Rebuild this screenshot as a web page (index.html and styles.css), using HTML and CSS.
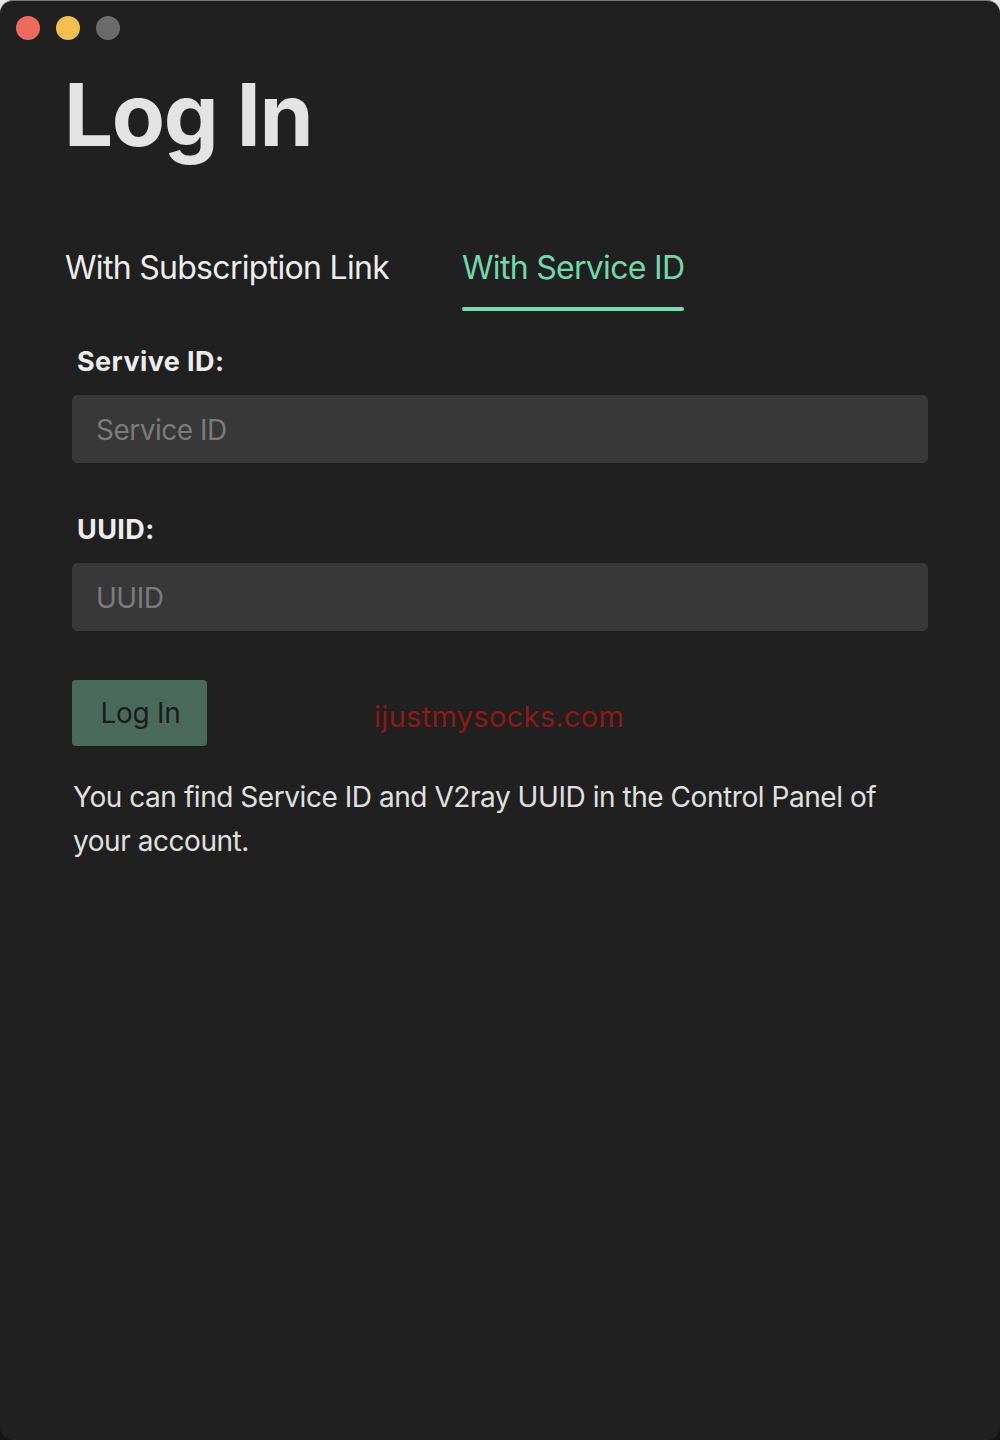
FILE: index.html
```html
<!DOCTYPE html>
<html lang="en">
<head>
<meta charset="utf-8">
<title>Log In</title>
<link rel="stylesheet" href="styles.css">
</head>
<body>
<div class="window">
  <div class="lights">
    <span class="light red"></span>
    <span class="light yellow"></span>
    <span class="light grey"></span>
  </div>
  <div class="content">
    <h1 class="title">Log In</h1>
    <div class="tabs">
      <div class="tab"><span class="tab-label">With Subscription Link</span></div>
      <div class="tab active"><span class="tab-label">With Service ID</span><span class="tab-bar"></span></div>
    </div>
    <div class="form">
      <label class="field-label label-first">Servive ID:</label>
      <div class="input"><span class="placeholder">Service ID</span></div>
      <label class="field-label label-next">UUID:</label>
      <div class="input"><span class="placeholder">UUID</span></div>
      <div class="actions">
        <button class="btn">Log In</button>
        <span class="watermark">ijustmysocks.com</span>
      </div>
      <p class="hint">You can find Service ID and V2ray UUID in the Control Panel of your account.</p>
    </div>
  </div>
</div>
</body>
</html>
```
FILE: styles.css
```css
html, body {
  margin: 0;
  padding: 0;
}
body {
  width: 1000px;
  height: 1440px;
  background: linear-gradient(#e6e6e6 0%, #e6e6e6 50%, #141414 50%, #141414 100%);
  font-family: Inter, "Noto Sans", sans-serif;
  overflow: hidden;
}
.window {
  box-sizing: border-box;
  width: 1000px;
  height: 1440px;
  background: #202020;
  border-radius: 13px;
  border-top: 1px solid #7a7a7a;
  padding: 15px 0 0 0;
}
.lights {
  display: flex;
  gap: 16px;
  padding-left: 16px;
}
.light {
  width: 24px;
  height: 24px;
  border-radius: 50%;
}
.red { background: #ee6a5e; }
.yellow { background: #f5bf4f; }
.grey { background: #6b6b6b; }

.content {
  padding-left: 66px;
  padding-right: 72px;
}
.title {
  margin: 31px 0 0 -2px;
  font-size: 87px;
  line-height: 88px;
  font-weight: 700;
  color: #e3e3e3;
  letter-spacing: -1.4px;
}
.tabs {
  display: flex;
  gap: 73px;
  margin-top: 89px;
  margin-left: -1px;
}
.tab {
  display: flex;
  flex-direction: column;
  gap: 19px;
}
.tab-label {
  font-size: 32px;
  line-height: 40px;
  color: #ededed;
  white-space: nowrap;
  letter-spacing: -0.7px;
}
.tab.active .tab-label {
  color: #74d7ac;
}
.tab-bar {
  height: 4px;
  border-radius: 2px;
  background: #7dd9b1;
}
.form {
  padding-left: 6px;
  display: flex;
  flex-direction: column;
}
.field-label {
  display: block;
  padding-left: 5px;
  font-size: 27px;
  line-height: 32px;
  font-weight: 700;
  color: #ededed;
  letter-spacing: 0.4px;
}
.label-first { margin-top: 35px; }
.label-next { margin-top: 51px; }
.input {
  margin-top: 17px;
  height: 68px;
  background: #383838;
  border-radius: 5px;
  display: flex;
  align-items: center;
  padding-left: 24px;
}
.placeholder {
  font-size: 28px;
  color: #7b7b7b;
  letter-spacing: -0.5px;
  padding-top: 2px;
}
.actions {
  display: flex;
  align-items: center;
  margin-top: 49px;
}
.btn {
  width: 135px;
  height: 66px;
  border: none;
  border-radius: 4px;
  background: #4a6a5c;
  color: #1c1c1c;
  font-family: Inter, "Noto Sans", sans-serif;
  font-size: 28px;
  letter-spacing: -0.3px;
  padding: 0 0 0 2px;
}
.watermark {
  margin-left: 167px;
  font-size: 29px;
  color: #8b1a1a;
  padding-top: 6px;
  letter-spacing: 0.3px;
}
.hint {
  margin: 29px 0 0 1px;
  font-size: 28px;
  line-height: 44px;
  color: #e0e0e0;
  letter-spacing: -0.45px;
}
```
